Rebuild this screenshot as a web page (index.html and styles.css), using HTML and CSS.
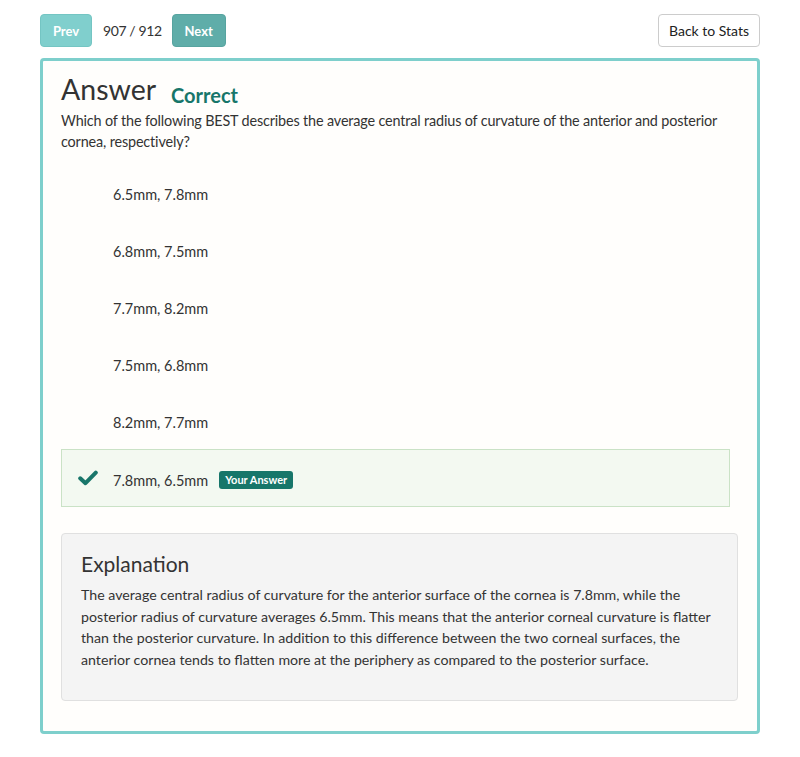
FILE: index.html
```html
<!DOCTYPE html>
<html>
<head>
<meta charset="utf-8">
<link rel="stylesheet" href="styles.css">
</head>
<body>
<div class="page">
  <div class="topbar">
    <div class="nav">
      <button class="btn btn-prev">Prev</button>
      <span class="count">907 / 912</span>
      <button class="btn btn-next">Next</button>
    </div>
    <button class="btn-back">Back to Stats</button>
  </div>
  <div class="card">
    <div class="head">
      <h1 class="title">Answer</h1>
      <span class="status">Correct</span>
    </div>
    <p class="question">Which of the following BEST describes the average central radius of curvature of the anterior and posterior cornea, respectively?</p>
    <ul class="options">
      <li class="option"><span class="icon"></span><span>6.5mm, 7.8mm</span></li>
      <li class="option"><span class="icon"></span><span>6.8mm, 7.5mm</span></li>
      <li class="option"><span class="icon"></span><span>7.7mm, 8.2mm</span></li>
      <li class="option"><span class="icon"></span><span>7.5mm, 6.8mm</span></li>
      <li class="option"><span class="icon"></span><span>8.2mm, 7.7mm</span></li>
      <li class="option option-correct"><span class="icon"><svg width="20" height="16" viewBox="0 0 20 16"><path d="M2.2 8.3 L7.5 13.2 L17.8 2.6" fill="none" stroke="#18766a" stroke-width="4" stroke-linecap="round" stroke-linejoin="round"/></svg></span><span>7.8mm, 6.5mm</span><span class="badge">Your Answer</span></li>
    </ul>
    <div class="explanation">
      <h2 class="exp-title">Explanation</h2>
      <p class="exp-text">The average central radius of curvature for the anterior surface of the cornea is 7.8mm, while the posterior radius of curvature averages 6.5mm. This means that the anterior corneal curvature is flatter than the posterior curvature. In addition to this difference between the two corneal surfaces, the anterior cornea tends to flatten more at the periphery as compared to the posterior surface.</p>
    </div>
  </div>
</div>
</body>
</html>
```

FILE: styles.css
```css
* { box-sizing: border-box; }
html, body { margin: 0; padding: 0; background: #ffffff; }
body { font-family: Lato, "Open Sans", sans-serif; color: #333; }
.page { width: 720px; margin: 0 0 0 40px; padding-top: 14px; }
.topbar { display: flex; justify-content: space-between; align-items: center; height: 33px; }
.nav { display: flex; align-items: center; }
.btn { border: 1px solid transparent; border-radius: 4px; color: #fff; font-family: Lato, sans-serif; font-weight: 700; font-size: 13px; height: 33px; padding: 0; }
.btn-prev { background: #80cfcd; border-color: #74c5c3; width: 52px; }
.btn-next { background: #5fada9; border-color: #57a4a0; width: 54px; }
.count { font-size: 14px; letter-spacing: -0.4px; color: #333; margin: 0 10px 0 11px; }
.btn-back { background: #fff; border: 1px solid #cccccc; border-radius: 4px; height: 33px; width: 102px; font-family: Lato, sans-serif; font-size: 14px; color: #222; padding: 0; }
.card { margin-top: 11px; border: 3px solid #7ecfcc; border-radius: 4px; background: #fffefc; padding: 10px 19px 30px 18px; }
.head { display: flex; align-items: baseline; }
.title { font-size: 28.5px; font-weight: 400; margin: 0; color: #333; line-height: 36px; }
.status { font-size: 20px; font-weight: 700; color: #17766a; margin-left: 15px; position: relative; top: 3px; }
.question { font-size: 14.4px; letter-spacing: -0.15px; line-height: 21px; margin: 3px 0 0 0; color: #333; }
.options { list-style: none; margin: 12px 8px 0 0; padding: 0; }
.option { display: flex; align-items: center; height: 57px; padding: 4px 0 0 16px; font-size: 14.5px; color: #333; border: 1px solid transparent; }
.option .icon { width: 35px; display: inline-flex; align-items: center; position: relative; top: -2px; }
.option-correct { background: #f3f9f1; border-color: #cae2c6; height: 58px; }
.badge { background: #17766a; color: #fff; font-size: 11px; font-weight: 700; border-radius: 3px; padding: 2px 6px 3px; margin-left: 11px; }
.explanation { margin-top: 26px; background: #f4f4f4; border: 1px solid #e0e0e0; border-radius: 4px; padding: 17px 16px 30px 19px; }
.exp-title { font-size: 21px; font-weight: 400; margin: 0 0 7px 0; color: #333; line-height: 26px; }
.exp-text { font-size: 14.2px; line-height: 21.5px; margin: 0; color: #333; }
```
